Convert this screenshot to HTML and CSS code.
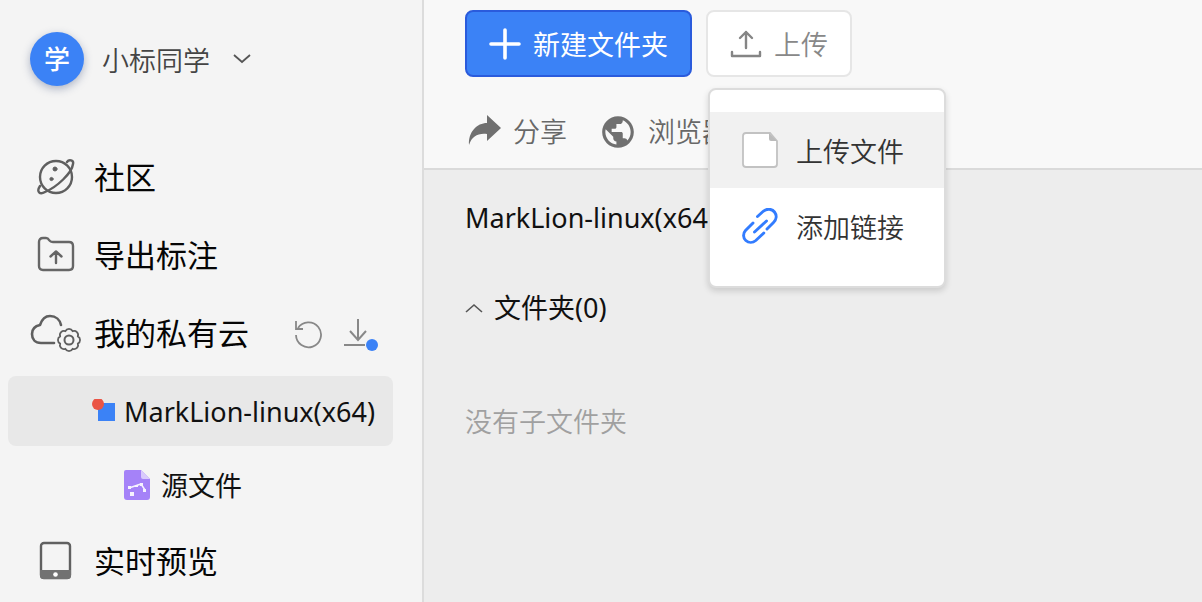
FILE: index.html
```html
<!DOCTYPE html>
<html lang="zh-CN">
<head>
<meta charset="utf-8">
<meta name="viewport" content="width=device-width, initial-scale=1">
<title>MarkLion</title>
<link rel="stylesheet" href="styles.css">
</head>
<body>
<div class="app">
  <aside class="sidebar">
    <button class="user" type="button">
      <span class="avatar">学</span>
      <span class="user-name">小标同学</span>
      <svg class="chevron" width="20" height="12" viewBox="0 0 20 12" fill="none" stroke="#555" stroke-width="1.800"><path d="M2 2l8 7 8-7"/></svg>
    </button>
    <nav class="nav">
      <a class="nav-item" href="#community">
        <span class="nav-icon">
          <svg width="40" height="40" viewBox="0 0 40 40" fill="none" stroke="#5f5f5f" stroke-width="2.400" stroke-linecap="round"><circle cx="20" cy="20" r="16"/><path d="M31 5c2-3 7-2 6 2-1 9-16 23-28 28-5 3-9 0-5-6"/><circle cx="19" cy="12" r="2" fill="#5f5f5f" stroke-width="1"/><circle cx="15.500" cy="22" r="1.600" fill="#5f5f5f" stroke-width="1"/></svg>
        </span>
        <span>社区</span>
      </a>
      <a class="nav-item" href="#export">
        <span class="nav-icon">
          <svg width="40" height="40" viewBox="0 0 40 40" fill="none" stroke="#666" stroke-width="2.400" stroke-linecap="round" stroke-linejoin="round"><path d="M3 7q0-4 4-4h3q2 0 3 2l1 1q1 1 3 1h16q4 0 4 4v20q0 4-4 4H7q-4 0-4-4z"/><path d="M20 28V17M14.500 21.500l5.500-5 5.500 5"/></svg>
        </span>
        <span>导出标注</span>
      </a>
      <div class="nav-item">
        <a class="nav-link" href="#cloud">
          <span class="nav-icon">
            <svg width="52" height="40" viewBox="0 0 52 40" fill="none" stroke="#5f5f5f" stroke-width="2.600" stroke-linecap="round" stroke-linejoin="round"><path d="M24 30H11C5 30 2 26 2 21c0-5 3-8 8-9C12 6 15 3 20 3c6 0 10 4 11 9"/><path d="M47.800 23.400a4 4 0 0 1 0 7.200 4 4 0 0 1-5.200 5.200 4 4 0 0 1-7.200 0 4 4 0 0 1-5.200-5.200 4 4 0 0 1 0-7.200 4 4 0 0 1 5.200-5.200 4 4 0 0 1 7.200 0 4 4 0 0 1 5.200 5.200z" stroke-width="1.800"/><circle cx="39" cy="27" r="4.500" stroke-width="2"/></svg>
          </span>
          <span>我的私有云</span>
        </a>
        <span class="tools">
          <button class="tool" type="button" aria-label="刷新">
            <svg width="32" height="32" viewBox="0 0 32 32" fill="none" stroke="#888" stroke-width="1.800"><path d="M5 11a12.500 12.500 0 1 1-2 7"/><path d="M3 4v8h7"/></svg>
          </button>
          <button class="tool" type="button" aria-label="下载">
            <svg width="35" height="32" viewBox="0 0 35 32" fill="none" stroke="#888" stroke-width="2"><path d="M15 2v20M7 14l8 9 8-9M1 28h21"/></svg>
            <span class="tool-badge"></span>
          </button>
        </span>
      </div>
      <a class="project" href="#project">
        <svg width="24" height="26" viewBox="0 0 24 26"><rect x="6" y="4" width="17" height="18" fill="#3b82f6"/><circle cx="6" cy="5" r="6" fill="#ea5445"/></svg>
        <span>MarkLion-linux(x64)</span>
      </a>
      <a class="source" href="#source">
        <svg width="28" height="32" viewBox="0 0 28 32"><path d="M3 0h15l9 9v18q0 3-3 3H4q-3 0-3-3V2q0-2 2-2z" fill="#a582f8"/><path d="M18 0l9 9h-7q-2 0-2-2z" fill="#d9cbfc"/><g fill="#fff" opacity=".9"><path d="M6 18l12-4 4 6" fill="none" stroke="#fff" stroke-width="1.500"/><rect x="5" y="16" width="3" height="3"/><rect x="17" y="13" width="3" height="3"/><rect x="20" y="19" width="3" height="3"/><rect x="7" y="22" width="4" height="4"/><rect x="12" y="15" width="3" height="2"/></g></svg>
        <span>源文件</span>
      </a>
      <a class="nav-item" href="#preview">
        <span class="nav-icon">
          <svg width="40" height="40" viewBox="0 0 40 40"><rect x="5" y="2" width="29" height="35" rx="3" fill="none" stroke="#606060" stroke-width="2.400"/><path d="M4 29h31v6q0 3-3 3H7q-3 0-3-3z" fill="#727272"/><circle cx="19.500" cy="33.500" r="2.300" fill="#fff"/></svg>
        </span>
        <span>实时预览</span>
      </a>
    </nav>
  </aside>
  <main class="main">
    <header class="header">
      <div class="actions">
        <button class="button button-primary" type="button">
          <svg width="32" height="32" viewBox="0 0 32 32" stroke="#fff" stroke-width="3.600" stroke-linecap="round"><path d="M16 2v28M2 16h28"/></svg>
          <span>新建文件夹</span>
        </button>
        <div class="upload">
          <button class="button button-plain" type="button" aria-expanded="true">
            <svg width="32" height="32" viewBox="0 0 32 32" fill="none" stroke="#858585" stroke-width="2.400" stroke-linecap="round" stroke-linejoin="round"><path d="M16 20V4M10 10l6-6 6 6M2 24v4h28v-4"/></svg>
            <span>上传</span>
          </button>
          <div class="menu">
            <button class="menu-item menu-item-active" type="button">
              <svg width="36" height="36" viewBox="0 0 36 36"><path d="M4 1h24l7 8v23q0 3-3 3H4q-3 0-3-3V4q0-3 3-3z" fill="#fff" stroke="#c2c2c2" stroke-width="1.800"/><path d="M27 1l8 8h-6q-2 0-2-2z" fill="#bbb"/></svg>
              <span>上传文件</span>
            </button>
            <button class="menu-item" type="button">
              <svg width="36" height="36" viewBox="0 0 36 36" fill="none" stroke="#327cff" stroke-width="2.900" stroke-linecap="round"><path d="M15.500 8.500l5.500-5C25 0 30 .800 32.500 4c2.600 3.400 2 7.500-1 10.500l-6.500 6.500M11 15l-7.500 7.500C.800 25.500 1 30 3.800 32.500c2.800 2.500 7 2.500 10 0l8-7.500M12.500 24L24.500 13"/></svg>
              <span>添加链接</span>
            </button>
          </div>
        </div>
      </div>
      <div class="toolbar">
        <button class="text-button" type="button">
          <svg width="34" height="34" viewBox="0 0 34 34" fill="#707070"><path d="M19 0l14 13-14 13v-7C10 18 4 21 1 30 0 17 9 8 19 8z"/></svg>
          <span>分享</span>
        </button>
        <button class="text-button" type="button">
          <svg width="38" height="38" viewBox="0 0 24 24" fill="#707070"><path d="M12 2C6.480 2 2 6.480 2 12s4.480 10 10 10 10-4.480 10-10S17.520 2 12 2zm-1 17.930c-3.950-.490-7-3.850-7-7.930 0-.620.080-1.210.210-1.790L9 15v1c0 1.100.900 2 2 2v1.930zm6.900-2.540c-.260-.810-1-1.390-1.900-1.390h-1v-3c0-.550-.450-1-1-1H8v-2h2c.550 0 1-.450 1-1V7h2c1.100 0 2-.900 2-2v-.410c2.930 1.190 5 4.060 5 7.410 0 2.080-.800 3.970-2.100 5.390z"/></svg>
          <span>浏览器</span>
        </button>
      </div>
    </header>
    <section class="content">
      <h1 class="title">MarkLion-linux(x64)</h1>
      <button class="group" type="button">
        <svg width="18" height="12" viewBox="0 0 18 12" fill="none" stroke="#555" stroke-width="1.600"><path d="M1 10l8-7 8 7"/></svg>
        <span>文件夹(0)</span>
      </button>
      <p class="empty">没有子文件夹</p>
    </section>
  </main>
</div>
</body>
</html>
```
FILE: styles.css
```css
* {
  box-sizing: border-box;
}

body {
  margin: 0;
  font-family: "Noto Sans", "Noto Sans CJK SC", sans-serif;
  font-size: 27px;
  line-height: 40px;
  color: #111;
}

button {
  margin: 0;
  padding: 0;
  border: 0;
  background: none;
  font: inherit;
  color: inherit;
  cursor: pointer;
}

a {
  color: inherit;
  text-decoration: none;
}

svg {
  display: block;
  flex: none;
}

span {
  white-space: nowrap;
}

.app {
  display: flex;
  min-height: 100vh;
}

.sidebar {
  flex: none;
  width: 424px;
  padding-top: 32px;
  background: #f4f4f4;
  border-right: 2px solid #dcdcdc;
}

.user {
  display: flex;
  align-items: center;
  gap: 18px;
  margin: 0 30px 52px;
  color: #444;
  font-weight: 350;
}

.user-name {
  padding-top: 3px;
}

.avatar {
  width: 54px;
  height: 54px;
  border-radius: 50%;
  background: #3b82f6;
  box-shadow: 0 3px 8px rgba(40, 60, 110, 0.35);
  color: #fff;
  font-weight: 500;
  font-size: 26px;
  line-height: 54px;
}

.chevron {
  margin-left: 4px;
}

.nav {
  display: flex;
  flex-direction: column;
}

.nav-item,
.nav-link {
  display: flex;
  align-items: center;
  height: 78px;
  font-size: 31px;
  color: #050505;
}

.nav-item {
  padding-left: 30px;
}

.nav-icon {
  display: flex;
  flex: none;
  justify-content: center;
  width: 52px;
  margin-right: 12px;
}

.tools {
  display: flex;
  gap: 18px;
  margin-left: 44px;
}

.tool {
  position: relative;
}

.tool-badge {
  position: absolute;
  right: 0;
  bottom: -2px;
  width: 12px;
  height: 12px;
  border-radius: 50%;
  background: #3b82f6;
}

.project {
  display: flex;
  align-items: center;
  gap: 8px;
  height: 70px;
  margin: 4px 29px 2px 8px;
  padding: 2px 0 0 84px;
  border-radius: 8px;
  background: #e8e8e8;
}

.source {
  display: flex;
  align-items: center;
  gap: 10px;
  height: 74px;
  padding: 2px 0 0 123px;
}

.main {
  flex: 1;
  display: flex;
  flex-direction: column;
  min-width: 0;
}

.header {
  padding: 10px 41px 16px;
  background: #f8f8f8;
  border-bottom: 2px solid #dadada;
}

.actions {
  display: flex;
  gap: 14px;
}

.button {
  display: flex;
  align-items: center;
  gap: 12px;
  height: 67px;
  padding: 0 22px;
  border: 2px solid;
  border-radius: 8px;
}

.button span,
.menu-item span {
  padding-top: 3px;
}

.button-primary {
  background: #3b82f6;
  border-color: #2a5bdc;
  color: #fff;
}

.button-plain {
  background: #fff;
  border-color: #e6e6e6;
  color: #888;
  font-weight: 350;
}

.upload {
  position: relative;
}

.menu {
  position: absolute;
  top: 78px;
  left: 2px;
  z-index: 1;
  width: 238px;
  padding: 22px 0;
  border: 2px solid #dcdcdc;
  border-radius: 8px;
  background: #fff;
  box-shadow: 0 3px 6px rgba(0, 0, 0, 0.15);
}

.menu-item {
  display: flex;
  align-items: center;
  gap: 18px;
  width: 100%;
  height: 76px;
  padding-left: 32px;
  color: #333;
  font-weight: 350;
}

.menu-item-active {
  background: #f1f1f1;
}

.toolbar {
  display: flex;
  gap: 32px;
  margin: 35px 0 0 3px;
}

.text-button {
  display: flex;
  align-items: center;
  gap: 11px;
  color: #686868;
  font-weight: 350;
}

.content {
  flex: 1;
  padding: 28px 41px;
  background: #ededed;
}

.title {
  margin: 0;
  font-size: 27px;
  font-weight: 400;
}

.group {
  display: flex;
  align-items: center;
  gap: 11px;
  margin-top: 50px;
}

.empty {
  margin: 74px 0 0;
  color: #a0a0a0;
  font-weight: 350;
}
```
